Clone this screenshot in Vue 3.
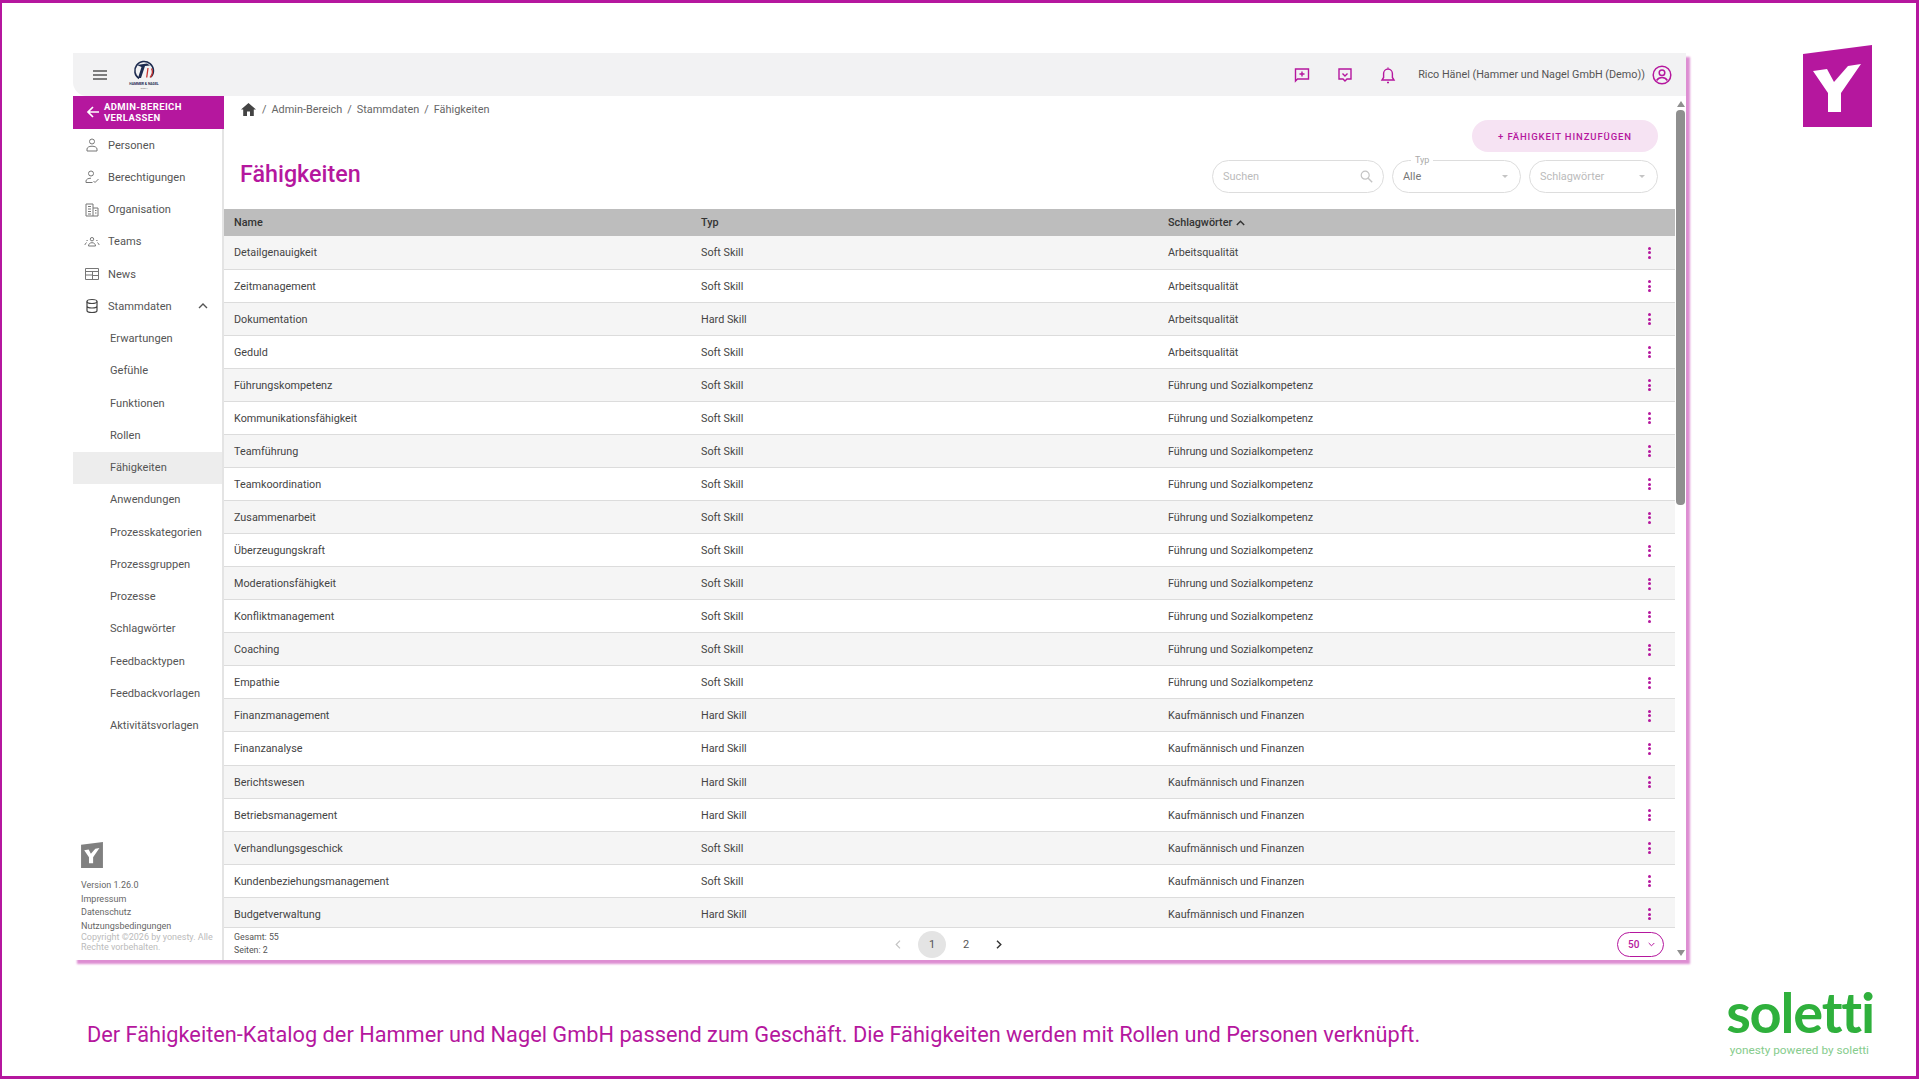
<template>
  <div class="slide">
    <div class="upper">
      <div class="window">
        <header class="topbar">
          <div class="topbar-left">
            <svg class="burger" width="14" height="10" viewBox="0 0 14 10">
              <path d="M0 1h14M0 5h14M0 9h14" stroke="#555" stroke-width="1.4" />
            </svg>
            <svg class="brand" width="34" height="32" viewBox="0 0 34 32">
              <path d="M12 19.500A9.300 9.300 0 1 1 24 18" fill="none" stroke="#1d2b4f" stroke-width="1.600" />
              <path d="M10 6l10-1.500 3 2-5 .5-4 12h-3l3.500-11z" fill="#1d2b4f" />
              <path d="M21 9l-1.300 9.500M24.500 9.500c1.500 3 1 6.500-1.500 9" fill="none" stroke="#c8332f" stroke-width="1.300" />
              <text x="17" y="26" text-anchor="middle" class="brand-text">HAMMER &amp; NAGEL</text>
              <text x="17" y="30" text-anchor="middle" class="brand-sub">GmbH</text>
            </svg>
          </div>
          <div class="topbar-right">
            <svg class="top-icon" width="16" height="16" viewBox="0 0 16 16">
              <path d="M1.500 2h13v10h-11l-2 2z" />
              <path d="M8 4.500v5M5.500 7h5" />
            </svg>
            <svg class="top-icon" width="16" height="16" viewBox="0 0 16 16">
              <path d="M2 2h12v10h-4l-2 2-2-2H2z" />
              <path d="M5.500 6.500L8 9l2.500-2.500" />
            </svg>
            <svg class="top-icon" width="16" height="18" viewBox="0 0 16 18">
              <path d="M2 14h12l-1.600-2.500v-4a4.400 4.400 0 0 0-8.800 0v4z" />
              <path d="M8 1.400v1.400M7 16.500h2" />
            </svg>
            <span class="user-name">Rico Hänel (Hammer und Nagel GmbH (Demo))</span>
            <svg class="user-icon" width="20" height="20" viewBox="0 0 20 20">
              <circle cx="10" cy="10" r="8.800" />
              <circle cx="10" cy="7.800" r="2.800" />
              <path d="M4.600 15.500c1.500-2.200 3.400-2.900 5.400-2.900s3.900.7 5.400 2.900" />
            </svg>
          </div>
        </header>

        <div class="body">
          <aside class="sidebar">
            <button class="leave">
              <svg width="14" height="14" viewBox="0 0 14 14">
                <path d="M13 7H2M7 2L2 7l5 5" fill="none" stroke="#fff" stroke-width="1.700" />
              </svg>
              <span>ADMIN-BEREICH<br />VERLASSEN</span>
            </button>

            <nav>
              <a v-for="item in mainNav" :key="item.label" class="nav-item">
                <svg width="16" height="16" viewBox="0 0 16 16" class="nav-icon">
                  <path :d="item.icon" />
                </svg>
                <span>{{ item.label }}</span>
              </a>
              <a class="nav-item">
                <svg width="16" height="16" viewBox="0 0 16 16" class="nav-icon dark">
                  <ellipse cx="8" cy="3.500" rx="5" ry="2" />
                  <path d="M3 3.500v9c0 1.100 2.200 2 5 2s5-.9 5-2v-9M3 8c0 1.100 2.200 2 5 2s5-.9 5-2" />
                </svg>
                <span>Stammdaten</span>
                <svg class="nav-caret" width="10" height="6" viewBox="0 0 10 6">
                  <path d="M1 5l4-4 4 4" fill="none" stroke="#555" stroke-width="1.400" />
                </svg>
              </a>
              <a
                v-for="item in subNav"
                :key="item"
                class="nav-sub"
                :class="{ active: item === 'Fähigkeiten' }"
                >{{ item }}</a
              >
            </nav>

            <div class="side-foot">
              <svg width="22" height="26" viewBox="0 0 69 82">
                <path d="M0 9L69 0v82H0z" fill="#808080" />
                <path :d="yMark" fill="#fff" />
              </svg>
              <div class="foot-links">
                <span>Version 1.26.0</span>
                <span>Impressum</span>
                <span>Datenschutz</span>
                <span>Nutzungsbedingungen</span>
              </div>
              <p class="copyright">Copyright ©2026 by yonesty. Alle Rechte vorbehalten.</p>
            </div>
          </aside>

          <main class="main">
            <div class="content">
              <div class="crumbs">
                <svg width="15" height="13" viewBox="0 0 15 13">
                  <path d="M7.500 0L0 6.500h2.200V13h3.800V8.500h3V13h3.800V6.500H15z" fill="#444" />
                </svg>
                <span class="sep">/</span>
                <span>Admin-Bereich</span>
                <span class="sep">/</span>
                <span>Stammdaten</span>
                <span class="sep">/</span>
                <span>Fähigkeiten</span>
              </div>

              <div class="head">
                <h1>Fähigkeiten</h1>
                <div class="head-right">
                  <button class="add">+ FÄHIGKEIT HINZUFÜGEN</button>
                  <div class="filters">
                    <div class="field search">
                      <span class="placeholder">Suchen</span>
                      <svg width="13" height="13" viewBox="0 0 13 13">
                        <circle cx="5.200" cy="5.200" r="4" fill="none" stroke="#c4c4c4" stroke-width="1.200" />
                        <path d="M8.200 8.200l4 4" stroke="#c4c4c4" stroke-width="1.400" />
                      </svg>
                    </div>
                    <div class="field select">
                      <span class="legend">Typ</span>
                      <span class="value">Alle</span>
                      <i class="arrow"></i>
                    </div>
                    <div class="field select">
                      <span class="placeholder">Schlagwörter</span>
                      <i class="arrow"></i>
                    </div>
                  </div>
                </div>
              </div>

              <div class="table-wrap">
                <table>
                  <colgroup>
                    <col class="c-name" />
                    <col class="c-type" />
                    <col class="c-tag" />
                    <col />
                  </colgroup>
                  <thead>
                    <tr>
                      <th>Name</th>
                      <th>Typ</th>
                      <th>
                        Schlagwörter
                        <svg width="9" height="6" viewBox="0 0 9 6">
                          <path d="M.8 5L4.500 1.300 8.200 5" fill="none" stroke="#333" stroke-width="1.400" />
                        </svg>
                      </th>
                      <th></th>
                    </tr>
                  </thead>
                  <tbody>
                    <tr v-for="row in rows" :key="row[0]">
                      <td>{{ row[0] }}</td>
                      <td>{{ row[1] }}</td>
                      <td>{{ row[2] }}</td>
                      <td class="dots-cell"><span class="dots"><i></i><i></i><i></i></span></td>
                    </tr>
                  </tbody>
                </table>
              </div>

              <footer class="pager-row">
                <div class="totals">
                  <span>Gesamt: 55</span>
                  <span>Seiten: 2</span>
                </div>
                <div class="pager">
                  <svg width="6" height="9" viewBox="0 0 6 9">
                    <path d="M5 .7L1.200 4.500 5 8.300" fill="none" stroke="#c4c4c4" stroke-width="1.200" />
                  </svg>
                  <span class="page current">1</span>
                  <span class="page">2</span>
                  <svg width="6" height="9" viewBox="0 0 6 9">
                    <path d="M1 .7l3.800 3.800L1 8.300" fill="none" stroke="#333" stroke-width="1.400" />
                  </svg>
                </div>
                <div class="per-page">
                  <span>50</span>
                  <svg width="7" height="5" viewBox="0 0 7 5">
                    <path d="M.7 1l2.800 2.800L6.300 1" fill="none" stroke="#b5179e" stroke-width="1" />
                  </svg>
                </div>
              </footer>
            </div>

            <div class="scrollbar">
              <i class="sb-up"></i>
              <div class="sb-track"><div class="sb-thumb"></div></div>
              <i class="sb-down"></i>
            </div>
          </main>
        </div>
      </div>

      <svg class="y-logo" width="69" height="82" viewBox="0 0 69 82">
        <path d="M0 9L69 0v82H0z" fill="#b5179e" />
        <path :d="yMark" fill="#fff" />
      </svg>
    </div>

    <div class="lower">
      <p class="caption">
        Der Fähigkeiten-Katalog der Hammer und Nagel GmbH passend zum Geschäft. Die Fähigkeiten werden mit
        Rollen und Personen verknüpft.
      </p>
      <div class="soletti">
        <span class="soletti-name">soletti</span>
        <span class="soletti-sub">yonesty powered by soletti</span>
      </div>
    </div>
  </div>
</template>

<script setup>
const yMark = "M10 26l14-2 7 13 14-16 13-2-20 29v19H25V48z";

const mainNav = [
  {
    label: "Personen",
    icon: "M8 2a2.500 2.500 0 1 0 0 5 2.500 2.500 0 0 0 0-5zM3 14v-2c0-1.500 2-2.800 5-2.800s5 1.300 5 2.800v2z",
  },
  {
    label: "Berechtigungen",
    icon: "M7 2a2.500 2.500 0 1 0 0 5 2.500 2.500 0 0 0 0-5zM8.500 13.500H2v-1.500c0-1.500 2-2.800 5-2.800M9.500 12l1.500 1.500 3.500-3.500",
  },
  {
    label: "Organisation",
    icon: "M2 14V2h7v12zM9 6h5v8H9M4 4.500h3M4 7h3M4 9.500h3M4 12h3M11 8.500h1.500M11 11h1.500",
  },
  {
    label: "Teams",
    icon: "M8 3.500a1.700 1.700 0 1 0 0 3.400 1.700 1.700 0 0 0 0-3.400zM4.500 12c0-2 1.500-3.300 3.500-3.300s3.500 1.300 3.500 3.300zM2.500 6.500h1.200M12.300 6.500h1.200M1 11c0-1.200.7-2 1.700-2.300M15 11c0-1.200-.7-2-1.700-2.300",
  },
  {
    label: "News",
    icon: "M1.500 2.500h13v11h-13zM1.500 5.500h13M8.500 5.500v8M8.500 9.500h6M1.500 9h7",
  },
];

const subNav = [
  "Erwartungen",
  "Gefühle",
  "Funktionen",
  "Rollen",
  "Fähigkeiten",
  "Anwendungen",
  "Prozesskategorien",
  "Prozessgruppen",
  "Prozesse",
  "Schlagwörter",
  "Feedbacktypen",
  "Feedbackvorlagen",
  "Aktivitätsvorlagen",
];

const AQ = "Arbeitsqualität";
const FS = "Führung und Sozialkompetenz";
const KF = "Kaufmännisch und Finanzen";

const rows = [
  ["Detailgenauigkeit", "Soft Skill", AQ],
  ["Zeitmanagement", "Soft Skill", AQ],
  ["Dokumentation", "Hard Skill", AQ],
  ["Geduld", "Soft Skill", AQ],
  ["Führungskompetenz", "Soft Skill", FS],
  ["Kommunikationsfähigkeit", "Soft Skill", FS],
  ["Teamführung", "Soft Skill", FS],
  ["Teamkoordination", "Soft Skill", FS],
  ["Zusammenarbeit", "Soft Skill", FS],
  ["Überzeugungskraft", "Soft Skill", FS],
  ["Moderationsfähigkeit", "Soft Skill", FS],
  ["Konfliktmanagement", "Soft Skill", FS],
  ["Coaching", "Soft Skill", FS],
  ["Empathie", "Soft Skill", FS],
  ["Finanzmanagement", "Hard Skill", KF],
  ["Finanzanalyse", "Hard Skill", KF],
  ["Berichtswesen", "Hard Skill", KF],
  ["Betriebsmanagement", "Hard Skill", KF],
  ["Verhandlungsgeschick", "Soft Skill", KF],
  ["Kundenbeziehungsmanagement", "Soft Skill", KF],
  ["Budgetverwaltung", "Hard Skill", KF],
];
</script>

<style>
html,
body {
  margin: 0;
  background: #fff;
}
</style>

<style scoped>
* {
  box-sizing: border-box;
}
.slide {
  width: 1919px;
  height: 1079px;
  overflow: hidden;
  display: flex;
  flex-direction: column;
  border: 3px solid #b5179e;
  border-left-width: 2px;
  background: #fff;
  font-family: Roboto, "Liberation Sans", sans-serif;
  color: #4a4a4a;
}
.upper {
  display: flex;
  align-items: flex-start;
  padding: 42px 0 0 71px;
}
.y-logo {
  margin-left: 117px;
  flex: none;
}
.window {
  margin-top: 8px;
  width: 1613px;
  height: 907px;
  flex: none;
  display: flex;
  flex-direction: column;
  background: #fff;
  box-shadow: 4px 4px 2px #dd8ed2;
}
.topbar {
  height: 43px;
  flex: none;
  display: flex;
  align-items: center;
  justify-content: space-between;
  background: #f2f2f3;
  border-radius: 0 0 0 14px;
  padding: 0 14px 0 20px;
}
.topbar-left {
  display: flex;
  align-items: center;
  gap: 20px;
}
.brand {
  margin-top: 1px;
}
.brand-text {
  font-size: 3.400px;
  font-weight: 700;
  fill: #1d2b4f;
}
.brand-sub {
  font-size: 2.500px;
  fill: #777;
}
.topbar-right {
  display: flex;
  align-items: center;
}
.top-icon {
  fill: none;
  stroke: #b5179e;
  stroke-width: 1.400;
  margin-right: 27px;
}
.top-icon:nth-of-type(3) {
  margin-right: 22px;
}
.user-name {
  font-size: 10.800px;
  color: #555;
  margin-right: 7px;
}
.user-icon {
  fill: none;
  stroke: #b5179e;
  stroke-width: 1.500;
}
.body {
  flex: 1;
  display: flex;
  min-height: 0;
}
.sidebar {
  width: 151px;
  flex: none;
  display: flex;
  flex-direction: column;
  border-right: 2px solid #e4e4e4;
}
.leave {
  height: 33px;
  margin-right: -2px;
  flex: none;
  display: flex;
  align-items: center;
  gap: 4px;
  padding: 0 0 1px 13px;
  border: none;
  background: #b5179e;
  color: #fff;
  font-family: inherit;
  font-size: 9.500px;
  font-weight: 700;
  line-height: 11px;
  letter-spacing: 0.4px;
  text-align: left;
}
.nav-item {
  height: 32.250px;
  display: flex;
  align-items: center;
  padding: 0 14px 0 11px;
  font-size: 11.100px;
  color: #555;
}
.nav-icon {
  fill: none;
  stroke: #777;
  stroke-width: 1;
  margin-right: 8px;
}
.nav-icon.dark {
  stroke: #444;
  stroke-width: 1.200;
}
.nav-caret {
  margin-left: auto;
}
.nav-sub {
  height: 32.250px;
  display: flex;
  align-items: center;
  padding-left: 37px;
  font-size: 11.100px;
  color: #555;
}
.nav-sub.active {
  background: #ededed;
}
.side-foot {
  margin-top: auto;
  padding: 0 8px 8px;
  font-size: 9px;
  color: #666;
}
.side-foot svg {
  display: block;
}
.foot-links {
  display: flex;
  flex-direction: column;
  margin-top: 11px;
  line-height: 13.400px;
}
.copyright {
  margin: -1px 0 0;
  color: #bbb;
  line-height: 10px;
}
.main {
  flex: 1;
  min-width: 0;
  display: flex;
}
.content {
  width: 1451px;
  flex: none;
  display: flex;
  flex-direction: column;
}
.crumbs {
  height: 24px;
  flex: none;
  display: flex;
  align-items: center;
  gap: 5px;
  padding: 3px 0 0 17px;
  font-size: 10.900px;
  color: #666;
}
.crumbs svg {
  margin-right: 1px;
}
.head {
  height: 89px;
  flex: none;
  display: flex;
  justify-content: space-between;
  padding: 0 17px 0 16px;
}
h1 {
  margin: 39px 0 0;
  font-size: 23.300px;
  line-height: 30px;
  font-weight: 500;
  color: #b5179e;
}
.head-right {
  display: flex;
  flex-direction: column;
  align-items: flex-end;
  gap: 8px;
}
.add {
  width: 186px;
  height: 32px;
  border: none;
  border-radius: 16px;
  background: #f6e3f3;
  color: #b5179e;
  font-family: inherit;
  font-size: 9.500px;
  font-weight: 500;
  letter-spacing: 0.900px;
}
.filters {
  display: flex;
  gap: 8px;
}
.field {
  position: relative;
  height: 33px;
  display: flex;
  align-items: center;
  justify-content: space-between;
  border: 1px solid #ddd;
  border-radius: 17px;
  padding: 0 10px;
  font-size: 10.900px;
}
.search {
  width: 172px;
}
.select {
  width: 129px;
  padding-right: 12px;
}
.placeholder {
  color: #bbb;
}
.value {
  color: #777;
}
.legend {
  position: absolute;
  left: 18px;
  top: -6px;
  padding: 0 4px;
  background: #fff;
  font-size: 9px;
  line-height: 10px;
  color: #aaa;
}
.arrow {
  width: 0;
  height: 0;
  border-left: 3px solid transparent;
  border-right: 3px solid transparent;
  border-top: 3px solid #c4c4c4;
}
.table-wrap {
  flex: 1;
  min-height: 0;
  overflow: hidden;
}
table {
  width: 100%;
  table-layout: fixed;
  border-collapse: collapse;
  font-size: 10.800px;
}
.c-name {
  width: 467px;
}
.c-type {
  width: 467px;
}
.c-tag {
  width: 466px;
}
th {
  height: 27px;
  padding: 0 0 0 10px;
  background: #bdbdbd;
  text-align: left;
  font-weight: 500;
  color: #333;
}
th svg {
  margin-left: 1px;
}
td {
  height: 33.070px;
  padding: 1px 0 0 10px;
  border-bottom: 1px solid #dcdcdc;
  color: #444;
}
tbody tr:nth-child(odd) td {
  background: #f5f5f5;
}
td.dots-cell {
  padding-left: 24px;
}
.dots {
  display: flex;
  flex-direction: column;
  gap: 1.500px;
}
.dots i {
  width: 3px;
  height: 3px;
  border-radius: 50%;
  background: #b5179e;
}
.pager-row {
  height: 33px;
  flex: none;
  display: flex;
  align-items: center;
  border-top: 1px solid #dcdcdc;
  padding: 0 11px 0 10px;
}
.totals {
  width: 661px;
  flex: none;
  display: flex;
  flex-direction: column;
  font-size: 8.800px;
  line-height: 13px;
  color: #555;
}
.pager {
  display: flex;
  align-items: center;
  font-size: 11px;
  color: #555;
}
.page {
  width: 28px;
  height: 27px;
  margin: 0 3px;
  display: flex;
  align-items: center;
  justify-content: center;
}
.pager svg:first-child {
  margin-right: 14px;
}
.pager svg:last-child {
  margin-left: 13px;
}
.page.current {
  background: #e4e4e4;
  border-radius: 50%;
}
.per-page {
  margin-left: auto;
  width: 47px;
  height: 25px;
  display: flex;
  align-items: center;
  justify-content: space-between;
  border: 1px solid #b5179e;
  border-radius: 13px;
  padding: 0 8px 0 10px;
  font-size: 10px;
  font-weight: 500;
  color: #b5179e;
}
.scrollbar {
  flex: 1;
  display: flex;
  flex-direction: column;
  align-items: center;
  padding: 5px 0 4px;
}
.sb-track {
  flex: 1;
  width: 100%;
  padding: 3px 1px 0;
}
.sb-thumb {
  height: 395px;
  border-radius: 4px;
  background: #8f8f8f;
}
.sb-up,
.sb-down {
  width: 0;
  height: 0;
  border-left: 4px solid transparent;
  border-right: 4px solid transparent;
}
.sb-up {
  border-bottom: 6px solid #8f8f8f;
}
.sb-down {
  border-top: 6px solid #8f8f8f;
}
.lower {
  flex: 1;
  display: flex;
  justify-content: space-between;
  padding: 0 42px 0 85px;
}
.caption {
  margin: 60px 0 0;
  font-size: 21.750px;
  line-height: 30px;
  color: #b5179e;
  white-space: nowrap;
}
.soletti {
  display: flex;
  flex-direction: column;
  align-items: flex-end;
  padding-top: 24px;
}
.soletti-name {
  font-family: Lato, sans-serif;
  font-size: 56px;
  line-height: 56px;
  font-weight: 700;
  color: #2fb03c;
  letter-spacing: -1.200px;
}
.soletti-sub {
  margin: 1px 5px 0 0;
  font-size: 11.800px;
  line-height: 18px;
  color: #86cc8c;
}
</style>
